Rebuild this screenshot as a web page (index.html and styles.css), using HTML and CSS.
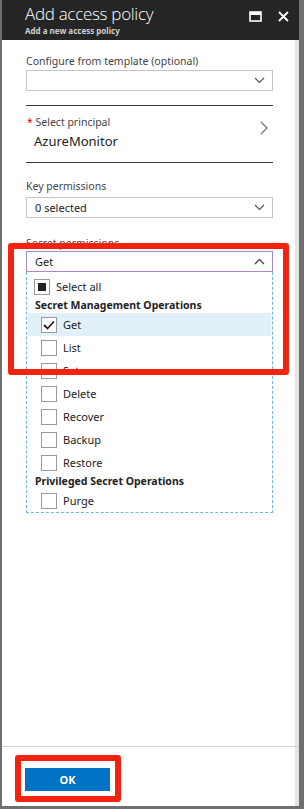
FILE: index.html
```html
<!DOCTYPE html>
<html lang="en">
<head>
    <meta charset="UTF-8">
    <meta name="viewport" content="width=device-width, initial-scale=1.0">
    <title>Add access policy</title>
    <link rel="stylesheet" href="styles.css">
</head>
<body>
    <div class="blade">
        <header class="blade-header">
            <div class="blade-titles">
                <h1>Add access policy</h1>
                <div class="subtitle">Add a new access policy</div>
            </div>
            <div class="blade-actions">
                <svg width="13" height="11" viewBox="0 0 13 11"><rect x="1" y="1" width="11" height="9" fill="none" stroke="#fff" stroke-width="1.6"/><rect x="1" y="1" width="11" height="3" fill="#fff"/></svg>
                <svg width="11" height="11" viewBox="0 0 11 11"><path d="M1 1 L10 10 M10 1 L1 10" stroke="#fff" stroke-width="1.8"/></svg>
            </div>
        </header>

        <main class="blade-content">
            <label class="field-label">Configure from template (optional)</label>
            <div class="dropdown">
                <span></span>
                <svg class="chevron" width="11" height="7" viewBox="0 0 11 7"><path d="M1 1 L5.5 5.5 L10 1" fill="none" stroke="#555" stroke-width="1.2"/></svg>
            </div>
            <div class="separator"></div>

            <div class="principal">
                <div>
                    <div class="field-label"><span class="required">*</span> Select principal</div>
                    <div class="principal-name">AzureMonitor</div>
                </div>
                <svg width="8" height="14" viewBox="0 0 8 14"><path d="M1 1 L7 7 L1 13" fill="none" stroke="#666" stroke-width="1.1"/></svg>
            </div>
            <div class="separator"></div>

            <label class="field-label key-label">Key permissions</label>
            <div class="dropdown">
                <span>0 selected</span>
                <svg class="chevron" width="11" height="7" viewBox="0 0 11 7"><path d="M1 1 L5.5 5.5 L10 1" fill="none" stroke="#555" stroke-width="1.2"/></svg>
            </div>

            <label class="field-label secret-label">Secret permissions</label>
            <div class="dropdown open">
                <span>Get</span>
                <svg class="chevron" width="11" height="7" viewBox="0 0 11 7"><path d="M1 6 L5.5 1.5 L10 6" fill="none" stroke="#444" stroke-width="1.3"/></svg>
            </div>
            <div class="option-list">
                <div class="option select-all">
                    <span class="checkbox partial"></span>
                    <span>Select all</span>
                </div>
                <div class="group-title">Secret Management Operations</div>
                <div class="option item selected">
                    <span class="checkbox"><svg width="12" height="10" viewBox="0 0 12 10"><path d="M1 5 L4.5 8.5 L11 1.5" fill="none" stroke="#222" stroke-width="1.8"/></svg></span>
                    <span>Get</span>
                </div>
                <div class="option item"><span class="checkbox"></span><span>List</span></div>
                <div class="option item"><span class="checkbox"></span><span>Set</span></div>
                <div class="option item"><span class="checkbox"></span><span>Delete</span></div>
                <div class="option item"><span class="checkbox"></span><span>Recover</span></div>
                <div class="option item"><span class="checkbox"></span><span>Backup</span></div>
                <div class="option item"><span class="checkbox"></span><span>Restore</span></div>
                <div class="group-title privileged">Privileged Secret Operations</div>
                <div class="option item"><span class="checkbox"></span><span>Purge</span></div>
            </div>
        </main>

        <footer class="blade-footer">
            <button class="ok-button">OK</button>
        </footer>

        <div class="highlight highlight-permissions"></div>
        <div class="highlight highlight-ok"></div>
    </div>
</body>
</html>
```

FILE: styles.css
```css
* {
    box-sizing: border-box;
    margin: 0;
    padding: 0;
}

body {
    font-family: 'Noto Sans', 'Open Sans', sans-serif;
    background: #6f6f6f;
    width: 304px;
    height: 809px;
    overflow: hidden;
    color: #333;
}

.blade {
    position: relative;
    margin-left: 2px;
    width: 297px;
    height: 806px;
    background: #fff;
    border-right: 4px solid #e4e4e4;
    display: flex;
    flex-direction: column;
}

.blade-header {
    height: 40px;
    background: #252525;
    color: #fff;
    display: flex;
    justify-content: space-between;
    padding: 3px 10px 0 23px;
    margin-right: -4px;
}

.blade-titles h1 {
    font-family: 'Open Sans', sans-serif;
    font-weight: 300;
    font-size: 17px;
    line-height: 22px;
    letter-spacing: -0.3px;
}

.subtitle {
    font-size: 8px;
    font-weight: 700;
    color: #d0d0d0;
    line-height: 10px;
    margin-top: 1px;
}

.blade-actions {
    display: flex;
    gap: 16px;
    padding-top: 8px;
}

.blade-content {
    flex: 1;
    padding: 0 22px 0 24px;
}

.field-label {
    display: block;
    font-size: 10.5px;
    line-height: 14px;
    color: #444;
    margin-top: 14px;
    margin-bottom: 2px;
}

.dropdown {
    height: 21px;
    border: 1px solid #c6c6c6;
    display: flex;
    align-items: center;
    justify-content: space-between;
    padding: 0 7px 0 8px;
    font-size: 11px;
    color: #222;
}

.dropdown.open {
    border-color: #a989c5;
}

.separator {
    border-top: 1px solid #3a3a3a;
    margin-top: 14px;
}

.principal {
    display: flex;
    align-items: center;
    justify-content: space-between;
    padding-right: 5px;
}

.principal + .separator {
    margin-top: 12px;
}

.principal .field-label {
    margin-top: 9px;
    margin-bottom: 3px;
    padding-left: 1px;
}

.required {
    color: #e00;
}

.principal-name {
    font-size: 13px;
    line-height: 18px;
    color: #222;
    padding-left: 8px;
}

.key-label {
    margin-top: 16px;
    margin-bottom: 4px;
}

.secret-label {
    margin-top: 18px;
    margin-bottom: 1px;
}

.option-list {
    border: 1px dashed #6eb6da;
    border-top: none;
    padding: 3px 1px 0;
    font-size: 11px;
    color: #222;
}

.option {
    height: 23px;
    display: flex;
    align-items: center;
    gap: 6px;
}

.select-all {
    padding-left: 6px;
}

.item {
    padding-left: 13px;
}

.item.selected {
    background: #e2f1f9;
}

.checkbox {
    width: 16px;
    height: 16px;
    border: 1px solid #9a9a9a;
    background: #fff;
    display: flex;
    align-items: center;
    justify-content: center;
}

.checkbox.partial::after {
    content: "";
    width: 8px;
    height: 8px;
    background: #222;
}

.group-title {
    font-weight: 700;
    font-size: 10.5px;
    line-height: 15px;
    padding-left: 7px;
}

.group-title.privileged {
    line-height: 15px;
}

.blade-footer {
    height: 60px;
    border-top: 1px solid #d4d4d4;
    padding: 20px 0 0 23px;
    margin-right: -4px;
}

.ok-button {
    width: 85px;
    height: 23px;
    background: #0072c6;
    color: #fff;
    border: none;
    font-family: 'Noto Sans', sans-serif;
    font-weight: 700;
    font-size: 11px;
}

.highlight {
    position: absolute;
    border: 6px solid #f4230f;
    border-radius: 3px;
}

.highlight-permissions {
    left: 6px;
    top: 243px;
    width: 281px;
    height: 132px;
}

.highlight-ok {
    left: 13px;
    top: 755px;
    width: 106px;
    height: 47px;
}
```
